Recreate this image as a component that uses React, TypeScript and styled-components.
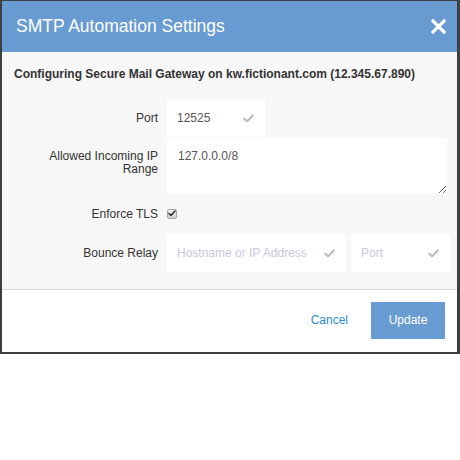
import styled, { createGlobalStyle } from "styled-components";

const GlobalStyle = createGlobalStyle`
  body {
    margin: 0;
    background: #ffffff;
    font-family: "Liberation Sans", Arial, sans-serif;
  }
  * {
    box-sizing: border-box;
  }
`;

const Check = ({ color = "#bbb", size = 11 }: { color?: string; size?: number }) => (
  <svg width={size} height={size * 0.8} viewBox="0 0 12 10">
    <path d="M1.2 5.4 L4.4 8.4 L10.8 1.6" fill="none" stroke={color} strokeWidth="2.4" strokeLinecap="round" strokeLinejoin="round" />
  </svg>
);

interface FieldProps {
  width: number;
  value?: string;
  placeholder?: string;
}

const Field = ({ width, value, placeholder }: FieldProps) => (
  <FieldWrap $width={width}>
    <FieldInput defaultValue={value} placeholder={placeholder} />
    <Check />
  </FieldWrap>
);

export default function App() {
  return (
    <>
      <GlobalStyle />
      <Modal>
        <Header>
          <Title>SMTP Automation Settings</Title>
          <CloseButton aria-label="close">
            <svg width="15" height="15" viewBox="0 0 15 15">
              <path d="M2 2 L13 13 M13 2 L2 13" stroke="#fff" strokeWidth="3.2" strokeLinecap="square" />
            </svg>
          </CloseButton>
        </Header>
        <Body>
          <Heading>Configuring Secure Mail Gateway on kw.fictionant.com (12.345.67.890)</Heading>
          <FormGrid>
            <Label>Port</Label>
            <Row>
              <Field width={98} value="12525" />
            </Row>

            <Label $top>Allowed Incoming IP Range</Label>
            <Row>
              <TextArea defaultValue="127.0.0.0/8" />
            </Row>

            <Label>Enforce TLS</Label>
            <Row>
              <CheckBox>
                <Check color="#333" size={8} />
              </CheckBox>
            </Row>

            <Label>Bounce Relay</Label>
            <Row $gap={5}>
              <Field width={179} placeholder="Hostname or IP Address" />
              <Field width={99} placeholder="Port" />
            </Row>
          </FormGrid>
        </Body>
        <Footer>
          <CancelButton>Cancel</CancelButton>
          <SubmitButton>Update</SubmitButton>
        </Footer>
      </Modal>
    </>
  );
}

const Modal = styled.div`
  width: 460px;
  border: 2px solid #3f3f3f;
  border-top-width: 1px;
  border-right-width: 3px;
  background: #fff;
`;

const Header = styled.div`
  height: 51px;
  background: #689bd2;
  display: flex;
  align-items: center;
  justify-content: space-between;
  padding: 0 11px 1px 14px;
`;

const Title = styled.h1`
  margin: 0;
  font-size: 17.5px;
  font-weight: 400;
  color: #fff;
`;

const CloseButton = styled.button`
  border: none;
  background: none;
  padding: 0;
  display: flex;
  cursor: pointer;
`;

const Body = styled.div`
  background: #f7f7f7;
  padding: 15px 10px 17px 12px;
  border-bottom: 1px solid #dddddd;
`;

const Heading = styled.div`
  font-size: 12px;
  font-weight: 700;
  line-height: 15px;
  color: #333;
  margin-bottom: 17px;
`;

const Footer = styled.div`
  height: 62px;
  display: flex;
  align-items: center;
  justify-content: flex-end;
  gap: 23px;
  padding: 0 12px 2px 0;
`;

const CancelButton = styled.button`
  border: none;
  background: none;
  padding: 0;
  font-family: inherit;
  font-size: 12px;
  color: #2a8cd6;
  cursor: pointer;
`;

const SubmitButton = styled.button`
  width: 74px;
  height: 37px;
  border: none;
  background: #689bd2;
  color: #fff;
  font-family: inherit;
  font-size: 12px;
  cursor: pointer;
`;

const FormGrid = styled.div`
  display: grid;
  grid-template-columns: 144px 1fr;
  column-gap: 9px;
  row-gap: 1px;
`;

const Label = styled.div<{ $top?: boolean }>`
  font-size: 12px;
  line-height: 13px;
  color: #333;
  text-align: right;
  align-self: ${(p) => (p.$top ? "start" : "center")};
  padding-top: ${(p) => (p.$top ? "12px" : "0")};
`;

const Row = styled.div<{ $gap?: number }>`
  display: flex;
  align-items: center;
  min-height: 38px;
  gap: ${(p) => p.$gap || 0}px;
`;

const TextArea = styled.textarea`
  width: 280px;
  height: 56px;
  border: none;
  background: #fff;
  padding: 11px;
  font-family: inherit;
  font-size: 12px;
  line-height: 14px;
  color: #555;
  resize: vertical;
  outline: none;
`;

const CheckBox = styled.span`
  width: 10px;
  height: 10px;
  margin-top: -1px;
  border: 1px solid #a5a5a5;
  border-radius: 2px;
  background: linear-gradient(#eeeeee, #d4d4d4);
  display: flex;
  align-items: center;
  justify-content: center;
`;

const FieldWrap = styled.div<{ $width: number }>`
  width: ${(p) => p.$width}px;
  height: 38px;
  background: #fff;
  display: flex;
  align-items: center;
  padding: 0 11px 0 10px;
`;

const FieldInput = styled.input`
  flex: 1;
  min-width: 0;
  border: none;
  background: none;
  padding: 0;
  font-family: inherit;
  font-size: 12px;
  color: #555;
  outline: none;

  &::placeholder {
    color: #c6c8df;
  }
`;
